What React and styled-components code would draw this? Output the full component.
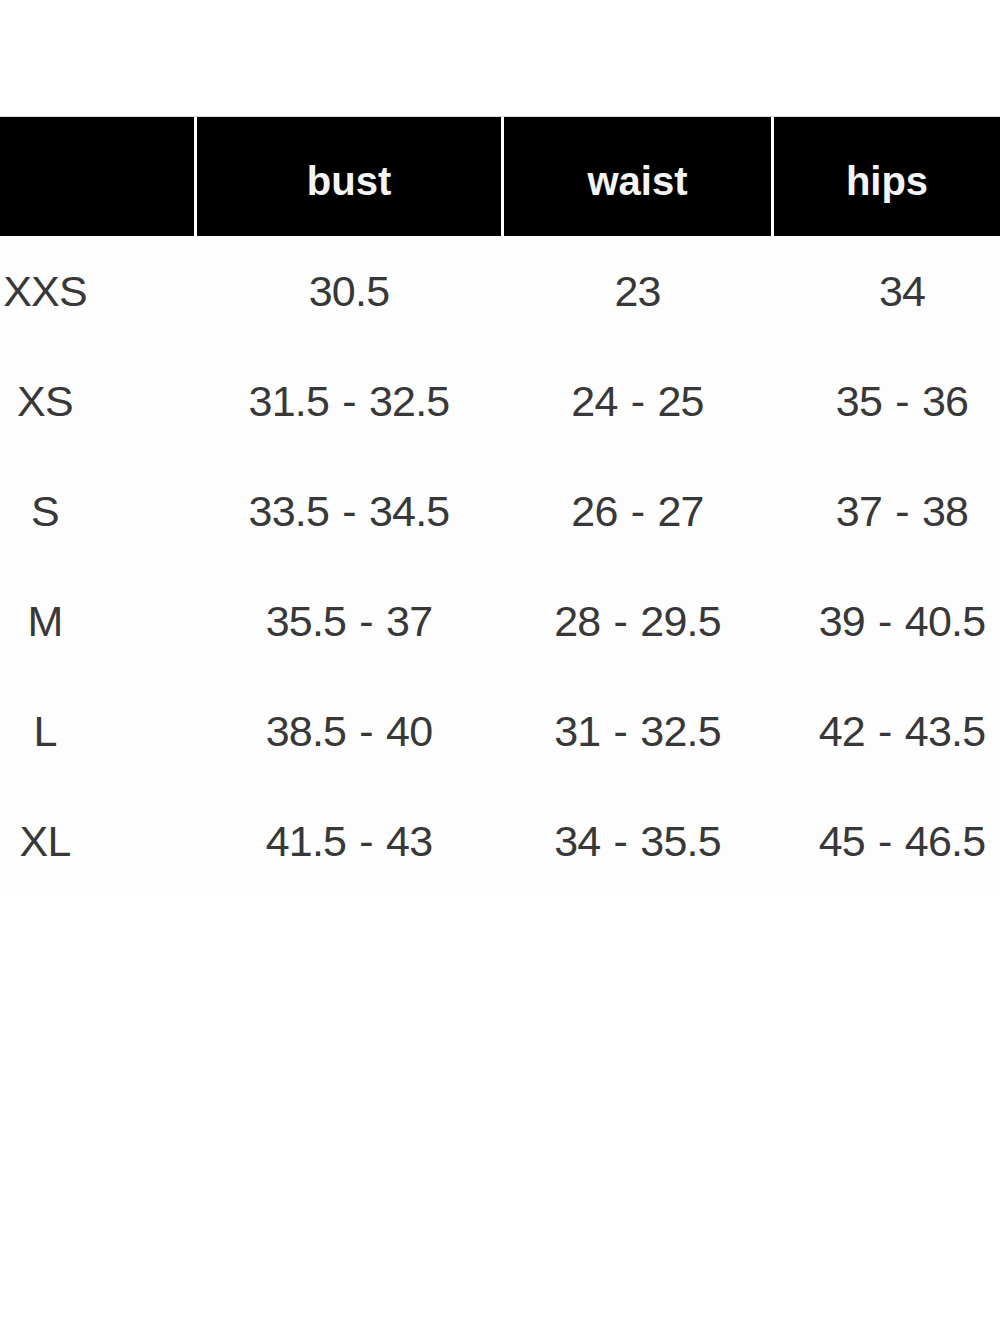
import React from "react";
import styled, { createGlobalStyle } from "styled-components";

const GlobalStyle = createGlobalStyle`
  html, body {
    margin: 0;
    padding: 0;
    background: #ffffff;
  }
  body {
    font-family: "Liberation Sans", Arial, Helvetica, sans-serif;
  }
`;

const columns = "194px 304px 267px 1fr";

const rows = [
  ["XXS", "30.5", "23", "34"],
  ["XS", "31.5 - 32.5", "24 - 25", "35 - 36"],
  ["S", "33.5 - 34.5", "26 - 27", "37 - 38"],
  ["M", "35.5 - 37", "28 - 29.5", "39 - 40.5"],
  ["L", "38.5 - 40", "31 - 32.5", "42 - 43.5"],
  ["XL", "41.5 - 43", "34 - 35.5", "45 - 46.5"],
];

// content boxes for body cells, so the values sit where the chart puts them
const cellPad = ["0 104px 0 0", "0", "0", "0 0 0 30px"];

const App = () => {
  return (
    <Page>
      <GlobalStyle />
      <Chart>
        <HeadRow>
          <HeadCell />
          <HeadCell>bust</HeadCell>
          <HeadCell>waist</HeadCell>
          <HeadCell>hips</HeadCell>
        </HeadRow>
        {rows.map((row) => (
          <Row key={row[0]}>
            {row.map((value, i) => (
              <Cell key={i} pad={cellPad[i]}>
                {value}
              </Cell>
            ))}
          </Row>
        ))}
      </Chart>
    </Page>
  );
};

export default App;

const Page = styled.div`
  width: 1000px;
  min-height: 1333px;
  background: #ffffff;
  padding-top: 116px;
  box-sizing: border-box;
  overflow: hidden;
`;

const Chart = styled.div`
  display: flex;
  flex-direction: column;
  background: #fdfdfd;
`;

const HeadRow = styled.div`
  display: grid;
  grid-template-columns: ${columns};
  column-gap: 3px;
  height: 120px;
  background: #ffffff;
  border-top: 1px solid #d8d8d8;
  box-sizing: border-box;
`;

const HeadCell = styled.div`
  background: #000000;
  color: #f4f4f4;
  display: flex;
  align-items: center;
  justify-content: center;
  font-size: 40px;
  font-weight: 700;
  letter-spacing: 0px;
  padding-top: 10px;
`;

const Row = styled.div`
  display: grid;
  grid-template-columns: ${columns};
  column-gap: 3px;
  height: 110px;
`;

const Cell = styled.div`
  display: flex;
  align-items: center;
  justify-content: center;
  padding: ${(p) => p.pad};
  color: #383838;
  font-size: 43px;
  letter-spacing: -0.8px;
  word-spacing: 2px;
  white-space: nowrap;
`;
